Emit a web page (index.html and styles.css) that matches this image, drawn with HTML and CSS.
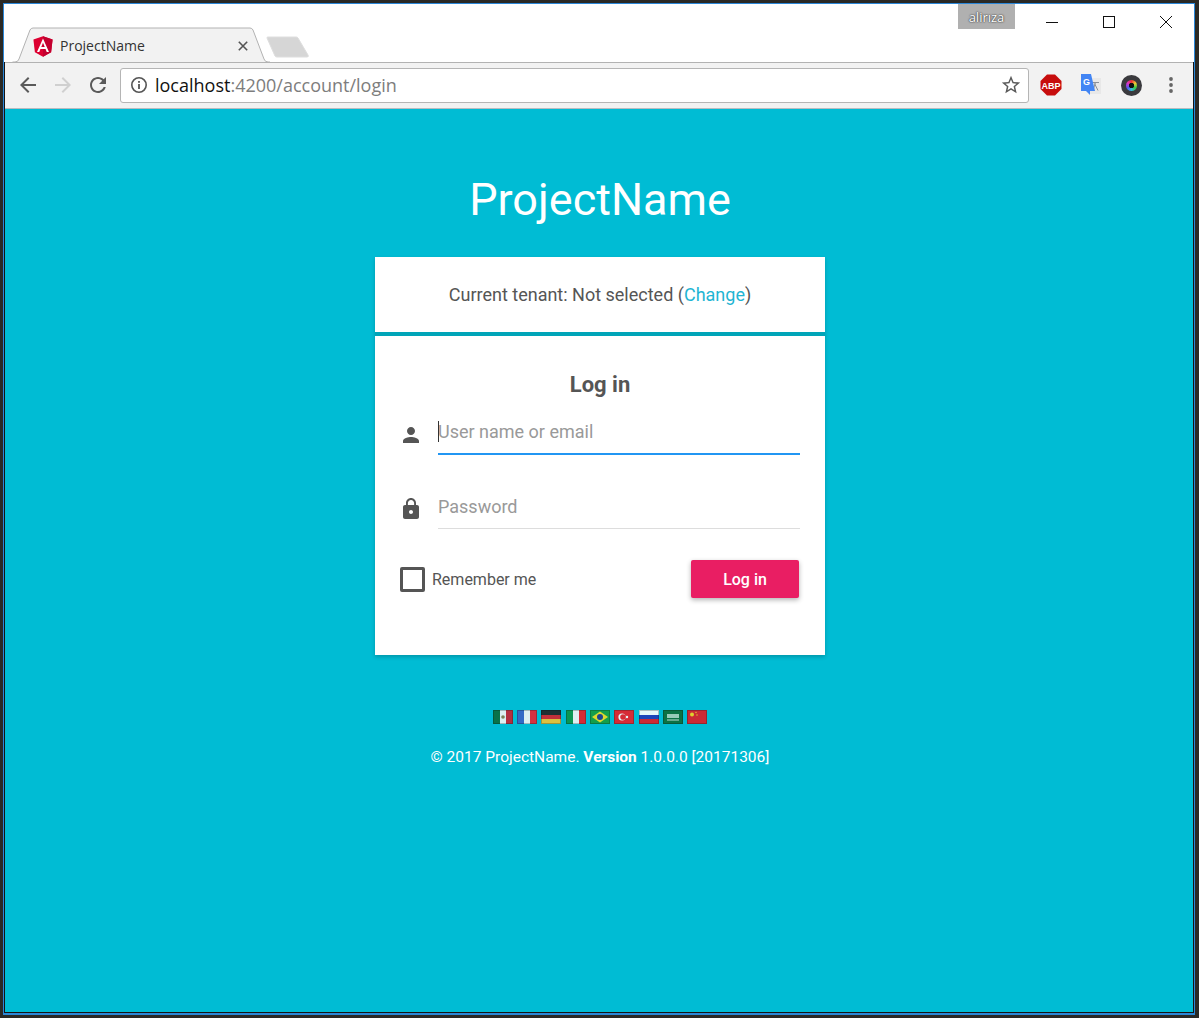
FILE: index.html
```html
<!DOCTYPE html>
<html lang="en">
  <head>
    <meta charset="utf-8" />
    <title>ProjectName</title>
    <link rel="stylesheet" href="styles.css">
  </head>
  <body>
    <div class="window">
      <div class="tab-strip">
        <div class="tab">
          <svg class="tab-shape" width="258" height="36" viewBox="0 0 258 36">
            <path d="M0.5 35 H3 Q6 35 7 32 L18 3 Q19 1 21 1 H238 Q240 1 241 3 L252 32 Q253 35 256 35 H258" fill="#f2f2f2" stroke="#b2b2b2" />
          </svg>
          <svg class="tab-logo" width="20" height="21" viewBox="30 28 190 204">
            <polygon points="125,30 31.9,63.2 46.1,186.3 125,230 203.9,186.3 218.1,63.2" fill="#dd0031" />
            <polygon points="125,30 125,230 203.9,186.3 218.1,63.2" fill="#c3002f" />
            <path d="M125 52.1L66.8 182.6h21.7l11.7-29.2h49.4l11.7 29.2h21.7L125 52.1z M142 135.4H108l17-40.9L142 135.4z" fill="#fff" />
          </svg>
          <span class="tab-title">ProjectName</span>
          <svg class="tab-close" width="10" height="10" viewBox="0 0 10 10">
            <path d="M0.8 0.8 L9.2 9.2 M9.2 0.8 L0.8 9.2" stroke="#555" stroke-width="1.6" />
          </svg>
        </div>
        <svg class="new-tab" width="44" height="22" viewBox="0 0 44 22">
          <path d="M2 1 H30 Q31.5 1 32 2 L42 19 Q43 21 41 21 H11 Q9.5 21 9 20 L1 2 Q0.6 1 2 1z" fill="#d6d6d6" stroke="#dedede" />
        </svg>
        <div class="user-label">alirıza</div>
        <div class="win-controls">
          <div class="win-button">
            <svg width="12" height="12" viewBox="0 0 12 12"><path d="M0 6.5 H12" stroke="#111" /></svg>
          </div>
          <div class="win-button">
            <svg width="12" height="12" viewBox="0 0 12 12"><rect x="0.5" y="0.5" width="11" height="11" fill="none" stroke="#111" /></svg>
          </div>
          <div class="win-button">
            <svg width="12" height="12" viewBox="0 0 12 12"><path d="M0 0 L12 12 M12 0 L0 12" stroke="#111" /></svg>
          </div>
        </div>
      </div>

      <div class="browser-body">
        <div class="toolbar">
          <svg class="nav-icon" width="24" height="24" viewBox="0 0 24 24"><path d="M20 11H7.83l5.59-5.59L12 4l-8 8 8 8 1.41-1.41L7.83 13H20v-2z" /></svg>
          <svg class="nav-icon disabled" width="24" height="24" viewBox="0 0 24 24"><path d="M4 11h12.17l-5.59-5.59L12 4l8 8-8 8-1.41-1.41L16.17 13H4v-2z" /></svg>
          <svg class="nav-icon" width="24" height="24" viewBox="0 0 24 24"><path d="M17.65 6.35C16.2 4.9 14.21 4 12 4c-4.42 0-7.99 3.58-7.99 8s3.57 8 7.99 8c3.73 0 6.84-2.55 7.73-6h-2.08c-.82 2.33-3.04 4-5.65 4-3.31 0-6-2.69-6-6s2.69-6 6-6c1.66 0 3.14.69 4.22 1.78L13 11h7V4l-2.35 2.35z" /></svg>
          <div class="omnibox">
            <svg class="info-icon" width="18" height="18" viewBox="0 0 18 18">
              <circle cx="9" cy="9" r="7.2" fill="none" stroke="#555" stroke-width="1.6" />
              <rect x="8.1" y="8" width="1.8" height="5" fill="#555" />
              <rect x="8.1" y="5" width="1.8" height="1.8" fill="#555" />
            </svg>
            <span class="url"><span class="url-host">localhost</span>:4200/account/login</span>
            <svg class="star-icon" width="22" height="22" viewBox="0 0 24 24"><path d="M22 9.24l-7.19-.62L12 2 9.19 8.63 2 9.24l5.46 4.73L5.82 21 12 17.27 18.18 21l-1.63-7.03L22 9.24zM12 15.4l-3.76 2.27 1-4.28-3.32-2.88 4.38-.38L12 6.1l1.71 4.04 4.38.38-3.32 2.88 1 4.28L12 15.4z" /></svg>
          </div>
          <div class="extensions">
            <div class="ext">
              <svg width="22" height="22" viewBox="0 0 22 22">
                <polygon points="7,0.5 15,0.5 21.5,7 21.5,15 15,21.5 7,21.5 0.5,15 0.5,7" fill="#c70d0d" />
                <text x="11" y="14.6" text-anchor="middle" class="abp-text">ABP</text>
              </svg>
            </div>
            <div class="ext">
              <svg width="22" height="24" viewBox="0 0 22 24">
                <rect x="9" y="5" width="12" height="16" fill="#e8e8e8" />
                <path d="M12 9.5h7M15.5 9.5l-2.5 8M14.5 10.5l3.5 7" stroke="#8a9099" stroke-width="1" fill="none" />
                <polygon points="1,1 11,1 15,18 10,18 10,22 6,18 1,18" fill="#4285f4" />
                <text x="6.5" y="12" text-anchor="middle" class="g-text">G</text>
              </svg>
            </div>
            <div class="ext"><div class="camera"><div class="camera-lens"></div></div></div>
            <div class="ext">
              <svg width="6" height="18" viewBox="0 0 6 18">
                <circle cx="3" cy="3" r="1.9" fill="#666" />
                <circle cx="3" cy="9" r="1.9" fill="#666" />
                <circle cx="3" cy="15" r="1.9" fill="#666" />
              </svg>
            </div>
          </div>
        </div>

        <div class="page">
          <h1 class="app-name">ProjectName</h1>
          <div class="card">
            <div class="tenant">Current tenant: Not selected (<a href="#" class="tenant-link">Change</a>)</div>
            <form class="login-form">
              <h2 class="login-title">Log in</h2>
              <div class="field focused">
                <svg class="field-icon" width="24" height="24" viewBox="0 0 24 24"><path d="M12 12c2.21 0 4-1.79 4-4s-1.79-4-4-4-4 1.79-4 4 1.79 4 4 4zm0 2c-2.67 0-8 1.34-8 4v2h16v-2c0-2.66-5.33-4-8-4z" /></svg>
                <div class="field-line">
                  <input type="text" class="field-input" placeholder="User name or email" />
                  <span class="caret"></span>
                </div>
              </div>
              <div class="field">
                <svg class="field-icon" width="24" height="24" viewBox="0 0 24 24"><path d="M18 8h-1V6c0-2.76-2.24-5-5-5S7 3.24 7 6v2H6c-1.1 0-2 .9-2 2v10c0 1.1.9 2 2 2h12c1.1 0 2-.9 2-2V10c0-1.1-.9-2-2-2zm-6 9c-1.1 0-2-.9-2-2s.9-2 2-2 2 .9 2 2-.9 2-2 2zm3.1-9H8.9V6c0-1.71 1.39-3.1 3.1-3.1 1.71 0 3.1 1.39 3.1 3.1v2z" /></svg>
                <div class="field-line">
                  <input type="password" class="field-input" placeholder="Password" />
                </div>
              </div>
              <div class="login-options">
                <label class="remember">
                  <span class="checkbox"></span>
                  <span>Remember me</span>
                </label>
                <button type="button" class="login-button">Log in</button>
              </div>
            </form>
          </div>

          <div class="flags">
            <svg class="flag" viewBox="0 0 20 14"><rect width="7" height="14" fill="#0b6b3a" /><rect x="7" width="6" height="14" fill="#f5f5f5" /><rect x="13" width="7" height="14" fill="#c8202f" /><circle cx="10" cy="7" r="1.8" fill="#8a7a4a" /></svg>
            <svg class="flag" viewBox="0 0 20 14"><rect width="7" height="14" fill="#3a62c4" /><rect x="7" width="6" height="14" fill="#f5f5f5" /><rect x="13" width="7" height="14" fill="#ee2230" /></svg>
            <svg class="flag" viewBox="0 0 20 14"><rect width="20" height="5" fill="#222" /><rect y="5" width="20" height="4" fill="#d8232a" /><rect y="9" width="20" height="5" fill="#f2c230" /></svg>
            <svg class="flag" viewBox="0 0 20 14"><rect width="7" height="14" fill="#0a9246" /><rect x="7" width="6" height="14" fill="#f5f5f5" /><rect x="13" width="7" height="14" fill="#ee1c25" /></svg>
            <svg class="flag" viewBox="0 0 20 14"><rect width="20" height="14" fill="#169b3e" /><polygon points="10,1.5 18,7 10,12.5 2,7" fill="#f5dc1e" /><circle cx="10" cy="7" r="3" fill="#1e3a8a" /></svg>
            <svg class="flag" viewBox="0 0 20 14"><rect width="20" height="14" fill="#ee1c25" /><circle cx="8" cy="7" r="3.6" fill="#fff" /><circle cx="9" cy="7" r="2.8" fill="#ee1c25" /><circle cx="13" cy="7" r="1.2" fill="#fff" /></svg>
            <svg class="flag" viewBox="0 0 20 14"><rect width="20" height="5" fill="#fff" /><rect y="5" width="20" height="4" fill="#2039b8" /><rect y="9" width="20" height="5" fill="#e01b24" /></svg>
            <svg class="flag" viewBox="0 0 20 14"><rect width="20" height="14" fill="#0e6b35" /><rect x="4" y="4" width="12" height="4" fill="#a9cdb5" /><rect x="4" y="9.5" width="12" height="1" fill="#cfe3d5" /></svg>
            <svg class="flag" viewBox="0 0 20 14"><rect width="20" height="14" fill="#e01b24" /><circle cx="5" cy="4.5" r="2" fill="#f7d51d" /><circle cx="9" cy="2.5" r="0.7" fill="#f7d51d" /><circle cx="10" cy="5" r="0.7" fill="#f7d51d" /></svg>
          </div>
          <div class="copyright">© 2017 ProjectName. <b>Version</b> 1.0.0.0 [20171306]</div>
        </div>
      </div>
    </div>
  </body>
</html>
```

FILE: styles.css
```css
* {
  margin: 0;
  padding: 0;
  box-sizing: border-box;
}

body {
  background: #2a2925;
  padding: 3px 4px 3px 3px;
  height: 1018px;
  overflow: hidden;
  font-family: Roboto, sans-serif;
  color: #555;
}

/* browser frame */

.window {
  height: 1012px;
  display: flex;
  flex-direction: column;
  background: #fff;
  border: 1px solid #2b87d8;
  border-bottom-width: 2px;
}

.tab-strip {
  height: 58px;
  flex-shrink: 0;
  display: flex;
  align-items: flex-start;
  padding-left: 8px;
}

.tab {
  position: relative;
  z-index: 1;
  width: 258px;
  height: 36px;
  margin-top: 23px;
  padding: 9px 22px 0 21px;
  display: flex;
  align-items: flex-start;
}

.tab-shape {
  position: absolute;
  left: 0;
  top: 0;
}

.tab-logo {
  position: relative;
  flex-shrink: 0;
}

.tab-title {
  position: relative;
  flex: 1;
  margin-left: 7px;
  font-family: "Open Sans", sans-serif;
  font-size: 14px;
  line-height: 20px;
  color: #333;
}

.tab-close {
  position: relative;
  margin-top: 5px;
}

.new-tab {
  margin: 32px 0 0 -4px;
}

.user-label {
  width: 57px;
  height: 25px;
  margin-left: auto;
  margin-right: 8px;
  background: #b0b0b0;
  text-align: center;
  font-family: "Open Sans", sans-serif;
  font-size: 13px;
  line-height: 26px;
  color: #fff;
  text-shadow: 0 0 2px #333, 0 0 1px #333;
}

.win-controls {
  display: flex;
}

.win-button {
  width: 57px;
  height: 35px;
  display: flex;
  align-items: center;
  justify-content: center;
}

.browser-body {
  flex: 1;
  display: flex;
  flex-direction: column;
  border: 1px solid #141414;
  border-top: none;
  min-height: 0;
}

.toolbar {
  height: 47px;
  flex-shrink: 0;
  display: flex;
  align-items: center;
  gap: 11px;
  padding: 0 0 1px 11px;
  background: #f2f2f2;
  border-top: 1px solid #b2b2b2;
  border-bottom: 1px solid #b8bcc0;
}

.nav-icon {
  fill: #5a5a5a;
  flex-shrink: 0;
}

.nav-icon.disabled {
  fill: #d0d0d0;
}

.omnibox {
  width: 909px;
  height: 35px;
  margin-left: -1px;
  display: flex;
  align-items: center;
  padding: 0 6px 0 9px;
  background: #fff;
  border: 1px solid #b5b5b5;
  border-radius: 3px;
  flex-shrink: 0;
}

.info-icon {
  flex-shrink: 0;
}

.url {
  flex: 1;
  margin-left: 7px;
  font-family: "Open Sans", sans-serif;
  font-size: 18px;
  color: #7d7d7d;
}

.url-host {
  color: #111;
}

.star-icon {
  fill: #5a5a5a;
}

.extensions {
  display: flex;
  margin-left: -9px;
}

.ext {
  width: 40px;
  display: flex;
  align-items: center;
  justify-content: center;
}

.abp-text {
  font-family: "Liberation Sans", sans-serif;
  font-size: 9px;
  font-weight: 700;
  fill: #fff;
}

.g-text {
  font-family: "Liberation Sans", sans-serif;
  font-size: 9px;
  font-weight: 700;
  fill: #fff;
}

.camera {
  width: 21px;
  height: 21px;
  display: flex;
  align-items: center;
  justify-content: center;
  border-radius: 50%;
  background: #3a3a3e;
}

.camera-lens {
  width: 11px;
  height: 11px;
  border-radius: 50%;
  background: radial-gradient(circle, #111 35%, transparent 37%), conic-gradient(#e33, #ec3, #3c4, #3bd, #55e, #d3c, #e33);
}

/* login page */

.page {
  flex: 1;
  display: flex;
  flex-direction: column;
  align-items: center;
  padding: 60px 0 0 2px;
  background: #00bcd4;
}

.app-name {
  font-size: 45px;
  font-weight: 400;
  line-height: 62px;
  color: #fff;
}

.card {
  width: 450px;
  margin-top: 26px;
  background: #fff;
  box-shadow: 0 2px 4px rgba(0, 0, 0, 0.2);
}

.tenant {
  height: 79px;
  padding-top: 26px;
  border-bottom: 4px solid #00a5b8;
  text-align: center;
  font-size: 18px;
  line-height: 24px;
}

.tenant-link {
  color: #1fb5d3;
  text-decoration: none;
}

.login-form {
  padding: 30px 25px 57px 25px;
}

.login-title {
  font-size: 22px;
  font-weight: 700;
  line-height: 38px;
  text-align: center;
  margin-bottom: 6px;
}

.field {
  height: 45px;
  display: flex;
  align-items: center;
  margin-bottom: 29px;
}

.field-icon {
  flex-shrink: 0;
  fill: #555;
  margin: 5px 15px 0 -1px;
}

.field-line {
  position: relative;
  flex: 1;
  height: 100%;
  border-bottom: 1px solid #ddd;
}

.focused .field-line {
  border-bottom: 2px solid #2196f3;
}

.field-input {
  width: 100%;
  height: 100%;
  border: none;
  outline: none;
  background: transparent;
  font-family: Roboto, sans-serif;
  font-size: 18px;
  color: #555;
}

.field-input::placeholder {
  color: #999;
  opacity: 1;
}

.caret {
  position: absolute;
  left: 0;
  top: 11px;
  width: 1px;
  height: 21px;
  background: #333;
}

.login-options {
  display: flex;
  align-items: center;
  justify-content: space-between;
  margin-top: 31px;
  padding-right: 1px;
}

.remember {
  display: flex;
  align-items: center;
  gap: 7px;
  font-size: 16px;
}

.checkbox {
  width: 25px;
  height: 25px;
  border: 3px solid #555;
  border-radius: 2px;
}

.login-button {
  width: 108px;
  height: 38px;
  border: none;
  border-radius: 2px;
  background: #e91e63;
  color: #fff;
  font-family: Roboto, sans-serif;
  font-size: 16px;
  font-weight: 500;
  box-shadow: 0 2px 5px rgba(0, 0, 0, 0.3);
}

.flags {
  display: flex;
  gap: 4.3px;
  margin-top: 55px;
}

.flag {
  width: 20px;
  height: 14px;
  opacity: 0.9;
  outline: 1px solid rgba(0, 0, 0, 0.25);
  outline-offset: -1px;
}

.copyright {
  margin-top: 23px;
  font-size: 15.5px;
  line-height: 20px;
  color: #fff;
}
```
